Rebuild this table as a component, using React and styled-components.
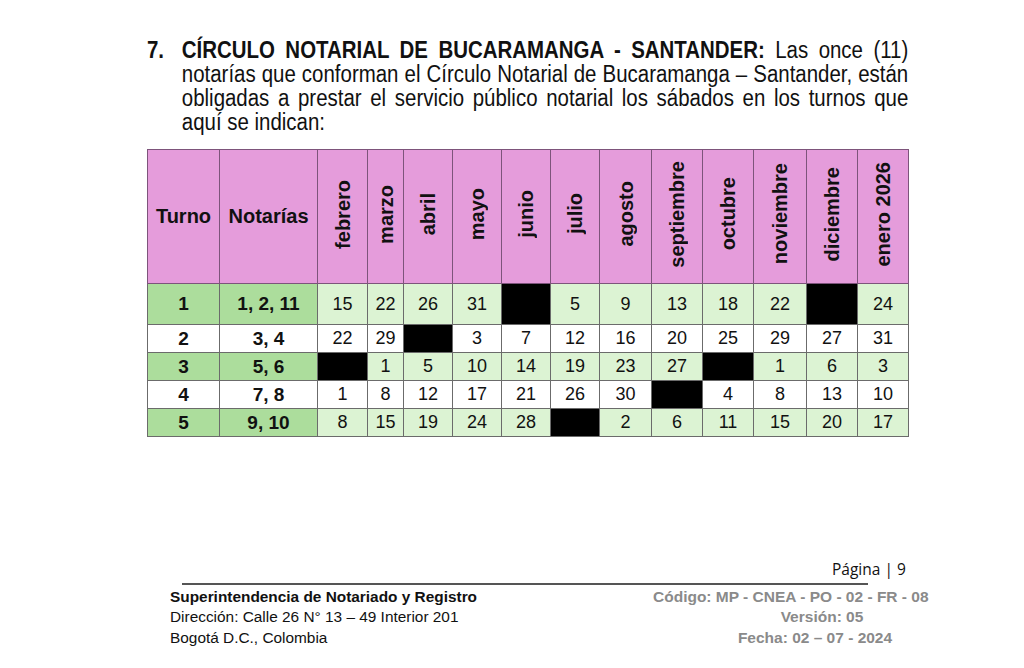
import React from "react";
import styled, { createGlobalStyle } from "styled-components";

const GlobalStyle = createGlobalStyle`
  html, body {
    margin: 0;
    padding: 0;
    background: #ffffff;
  }
  body {
    font-family: "Liberation Sans", Arial, sans-serif;
    color: #111;
  }
`;

const MONTHS = [
  { name: "febrero", width: 50 },
  { name: "marzo", width: 36 },
  { name: "abril", width: 49 },
  { name: "mayo", width: 49 },
  { name: "junio", width: 49 },
  { name: "julio", width: 49 },
  { name: "agosto", width: 52 },
  { name: "septiembre", width: 51 },
  { name: "octubre", width: 51 },
  { name: "noviembre", width: 53 },
  { name: "diciembre", width: 51 },
  { name: "enero 2026", width: 51 },
];

// null marks a blacked-out cell
const ROWS = [
  { turno: "1", notarias: "1, 2, 11", green: true, tall: true, days: [15, 22, 26, 31, null, 5, 9, 13, 18, 22, null, 24] },
  { turno: "2", notarias: "3, 4", days: [22, 29, null, 3, 7, 12, 16, 20, 25, 29, 27, 31] },
  { turno: "3", notarias: "5, 6", green: true, days: [null, 1, 5, 10, 14, 19, 23, 27, null, 1, 6, 3] },
  { turno: "4", notarias: "7, 8", days: [1, 8, 12, 17, 21, 26, 30, null, 4, 8, 13, 10] },
  { turno: "5", notarias: "9, 10", green: true, days: [8, 15, 19, 24, 28, null, 2, 6, 11, 15, 20, 17] },
];

const Page = styled("div")`
  width: 1024px;
  height: 668px;
  display: flex;
  flex-direction: column;
  overflow: hidden;
`;

const Section = styled("section")`
  margin: 38px 0 0 147px;
  width: 761px;
`;

/* no Arial Narrow installed: squeeze Liberation Sans horizontally */
const Heading = styled("div")`
  display: flex;
  width: 875px;
  transform: scaleX(0.87);
  transform-origin: left top;
  font-size: 23.5px;
  line-height: 24px;
  color: #111;
`;

const Number = styled("span")`
  flex: 0 0 40px;
  font-weight: bold;
`;

const Body = styled("div")`
  flex: 1;
`;

const Line = styled("div")`
  text-align: justify;
  text-align-last: ${(p) => (p.$last ? "left" : "justify")};
  white-space: nowrap;
`;

const Table = styled("table")`
  margin-top: 15px;
  border-collapse: collapse;
  table-layout: fixed;
  width: 761px;
`;

const HeadCell = styled("th")`
  height: 133px;
  padding: 0;
  background: #e59cdb;
  border: 1px solid #7d547b;
  font-size: 20px;
  font-weight: bold;
  text-align: center;
  vertical-align: middle;
  color: #111;
`;

const Vertical = styled("span")`
  display: inline-block;
  writing-mode: vertical-rl;
  transform: rotate(180deg);
  white-space: nowrap;
  line-height: 1;
`;

const Row = styled("tr")`
  height: ${(p) => (p.$tall ? 41 : 28)}px;
`;

const KeyCell = styled("td")`
  padding: 0;
  border: 1px solid #6b6b6b;
  background: ${(p) => (p.$green ? "#acdd9c" : "#ffffff")};
  font-size: 19px;
  font-weight: bold;
  text-align: center;
  vertical-align: middle;
`;

const DayCell = styled("td")`
  padding: 0;
  border: 1px solid #6b6b6b;
  background: ${(p) => (p.$off ? "#000000" : p.$green ? "#dcf3d3" : "#ffffff")};
  font-size: 18px;
  text-align: center;
  vertical-align: middle;
`;

const Footer = styled("footer")`
  margin-top: auto;
  padding-bottom: 20px;
`;

const PageNumber = styled("div")`
  margin-left: 832px;
  font-family: "Open Sans", "Noto Sans", sans-serif;
  font-size: 15.5px;
  line-height: 20px;
  color: #111;
`;

const Rule = styled("hr")`
  margin: 4px 0 0 182px;
  width: 686px;
  height: 0;
  border: none;
  border-top: 2px solid #555;
`;

const FooterInfo = styled("div")`
  display: flex;
  margin-top: 2px;
`;

const Address = styled("div")`
  margin-left: 170px;
  width: 483px;
  font-size: 15.4px;
  line-height: 20.5px;
  color: #111;
`;

const AddressLine = styled("div")`
  font-weight: ${(p) => (p.$bold ? "bold" : "normal")};
  white-space: nowrap;
`;

const Meta = styled("div")`
  width: 274px;
  text-align: center;
  font-size: 15.5px;
  line-height: 20.5px;
  font-weight: bold;
  color: #8a8a8a;
`;

const MetaLine = styled("div")`
  padding-left: ${(p) => p.$shift || 0}px;
  white-space: nowrap;
`;

export default function App() {
  return (
    <>
      <GlobalStyle />
      <Page>
        <Section>
          <Heading>
            <Number>7.</Number>
            <Body>
              <Line>
                <b>CÍRCULO NOTARIAL DE BUCARAMANGA - SANTANDER:</b> Las once (11)
              </Line>
              <Line>
                notarías que conforman el Círculo Notarial de Bucaramanga – Santander, están
              </Line>
              <Line>
                obligadas a prestar el servicio público notarial los sábados en los turnos que
              </Line>
              <Line $last>aquí se indican:</Line>
            </Body>
          </Heading>

          <Table>
            <colgroup>
              <col style={{ width: 72 }} />
              <col style={{ width: 98 }} />
              {MONTHS.map((m) => (
                <col key={m.name} style={{ width: m.width }} />
              ))}
            </colgroup>
            <thead>
              <tr>
                <HeadCell>Turno</HeadCell>
                <HeadCell>Notarías</HeadCell>
                {MONTHS.map((m) => (
                  <HeadCell key={m.name}>
                    <Vertical>{m.name}</Vertical>
                  </HeadCell>
                ))}
              </tr>
            </thead>
            <tbody>
              {ROWS.map((r) => (
                <Row key={r.turno} $tall={r.tall}>
                  <KeyCell $green={r.green}>{r.turno}</KeyCell>
                  <KeyCell $green={r.green}>{r.notarias}</KeyCell>
                  {r.days.map((d, i) => (
                    <DayCell key={i} $green={r.green} $off={d === null}>
                      {d}
                    </DayCell>
                  ))}
                </Row>
              ))}
            </tbody>
          </Table>
        </Section>

        <Footer>
          <PageNumber>Página | 9</PageNumber>
          <Rule />
          <FooterInfo>
            <Address>
              <AddressLine $bold>Superintendencia de Notariado y Registro</AddressLine>
              <AddressLine>Dirección: Calle 26 N° 13 – 49 Interior 201</AddressLine>
              <AddressLine>Bogotá D.C., Colombia</AddressLine>
            </Address>
            <Meta>
              <MetaLine>Código: MP - CNEA - PO - 02 - FR - 08</MetaLine>
              <MetaLine $shift={64}>Versión: 05</MetaLine>
              <MetaLine $shift={50}>Fecha: 02 – 07 - 2024</MetaLine>
            </Meta>
          </FooterInfo>
        </Footer>
      </Page>
    </>
  );
}
